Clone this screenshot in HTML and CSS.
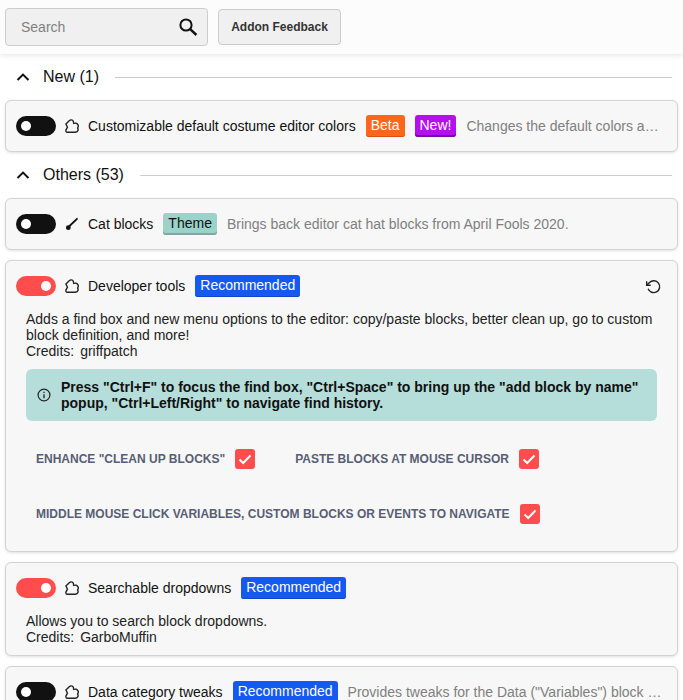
FILE: index.html
```html
<!DOCTYPE html>
<html lang="en">
<head>
<meta charset="utf-8">
<title>Addons</title>
<link rel="stylesheet" href="styles.css">
</head>
<body>
<svg class="defs" width="0" height="0" aria-hidden="true">
  <symbol id="puzzle" viewBox="0 0 14 14">
    <path d="M.9 4.900 4.500 1.600C5.200.6 7.600.6 8.300 2.200L8.700 4.500C10 3.700 12.500 4 13.200 6.200 13.500 7.300 13.100 8.300 12.600 9 13.500 10.200 13.300 13.200 10.500 13.200H2C1.300 13.200.9 12.700.9 12V11.200L2.500 8.200Z" fill="none" stroke="#222" stroke-width="1.400" stroke-linejoin="round"/>
  </symbol>
  <symbol id="chevron" viewBox="0 0 14 14">
    <path d="M1.500 10 7 4.600 12.500 10" fill="none" stroke="#111" stroke-width="2"/>
  </symbol>
  <symbol id="check" viewBox="0 0 20 20">
    <path d="M4.500 10.500 8.200 14 15.500 6.500" fill="none" stroke="#fff" stroke-width="2"/>
  </symbol>
</svg>

<header class="topbar">
  <div class="search">
    <span class="search-text">Search</span>
    <svg class="search-icon" viewBox="0 0 20 20"><circle cx="8" cy="8" r="5.600" fill="none" stroke="#111" stroke-width="2"/><path d="M12.200 12.200 18.400 18" stroke="#111" stroke-width="2.400" fill="none"/></svg>
  </div>
  <button class="feedback">Addon Feedback</button>
</header>

<main class="content">
  <section class="group group-new">
    <div class="section">
      <svg class="chev"><use href="#chevron"/></svg>
      <span class="section-name">New (1)</span>
      <span class="rule"></span>
    </div>
    <article class="card">
      <div class="row">
        <span class="toggle"></span>
        <svg class="ico"><use href="#puzzle"/></svg>
        <span class="name">Customizable default costume editor colors</span>
        <span class="tag tag-beta">Beta</span>
        <span class="tag tag-new">New!</span>
        <span class="desc">Changes the default colors and outlines of the costume editor.</span>
      </div>
    </article>
  </section>

  <section class="group">
    <div class="section">
      <svg class="chev"><use href="#chevron"/></svg>
      <span class="section-name">Others (53)</span>
      <span class="rule"></span>
    </div>
    <article class="card">
      <div class="row">
        <span class="toggle"></span>
        <svg class="ico" viewBox="0 0 14 14"><path d="M4.500 9 12 1.800" stroke="#111" stroke-width="1.800" stroke-linecap="round" fill="none"/><circle cx="3.300" cy="10.700" r="2.400" fill="#111"/></svg>
        <span class="name">Cat blocks</span>
        <span class="tag tag-theme">Theme</span>
        <span class="desc">Brings back editor cat hat blocks from April Fools 2020.</span>
      </div>
    </article>

    <article class="card">
      <div class="row">
        <span class="toggle on"></span>
        <svg class="ico"><use href="#puzzle"/></svg>
        <span class="name">Developer tools</span>
        <span class="tag tag-rec">Recommended</span>
        <svg class="reset" viewBox="0 0 24 24"><path d="M1 3.500V10h6.500" fill="none" stroke="#222" stroke-width="2.300"/><path d="M1 10 5.600 5.600A9.500 9.500 0 1 1 3.400 15.500" fill="none" stroke="#222" stroke-width="2.300"/></svg>
      </div>
      <p class="about">Adds a find box and new menu options to the editor: copy/paste blocks, better clean up, go to custom block definition, and more!<br>Credits: <span class="author">griffpatch</span></p>
      <div class="notice">
        <svg class="info" viewBox="0 0 14 14"><circle cx="7" cy="7" r="5.900" fill="none" stroke="#222" stroke-width="1.200"/><path d="M7 6.200v4M7 3.700v1.400" stroke="#222" stroke-width="1.300"/></svg>
        <span>Press "Ctrl+F" to focus the find box, "Ctrl+Space" to bring up the "add block by name" popup, "Ctrl+Left/Right" to navigate find history.</span>
      </div>
      <div class="settings">
        <label class="setting">ENHANCE "CLEAN UP BLOCKS"<span class="box"><svg class="tick"><use href="#check"/></svg></span></label>
        <label class="setting">PASTE BLOCKS AT MOUSE CURSOR<span class="box"><svg class="tick"><use href="#check"/></svg></span></label>
        <label class="setting">MIDDLE MOUSE CLICK VARIABLES, CUSTOM BLOCKS OR EVENTS TO NAVIGATE<span class="box"><svg class="tick"><use href="#check"/></svg></span></label>
      </div>
    </article>

    <article class="card">
      <div class="row">
        <span class="toggle on"></span>
        <svg class="ico"><use href="#puzzle"/></svg>
        <span class="name">Searchable dropdowns</span>
        <span class="tag tag-rec">Recommended</span>
      </div>
      <p class="about">Allows you to search block dropdowns.<br>Credits: <span class="author">GarboMuffin</span></p>
    </article>

    <article class="card">
      <div class="row">
        <span class="toggle"></span>
        <svg class="ico"><use href="#puzzle"/></svg>
        <span class="name">Data category tweaks</span>
        <span class="tag tag-rec">Recommended</span>
        <span class="desc">Provides tweaks for the Data ("Variables") block category.</span>
      </div>
    </article>
  </section>
</main>
</body>
</html>
```

FILE: styles.css
```css
* { box-sizing: border-box; }
html, body { margin: 0; height: 700px; overflow: hidden; background: #fff; }
body { font-family: "Liberation Sans", Arial, sans-serif; font-size: 14px; color: #111; }
.defs { position: absolute; }

.topbar { height: 54px; background: #fcfcfc; display: flex; align-items: center; padding: 0 5px; gap: 10px; box-shadow: 0 1px 6px rgba(0,0,0,.12); position: relative; }
.search { width: 203px; height: 38px; border: 1px solid #ccc; border-radius: 4px; background: #f0f0f0; display: flex; align-items: center; justify-content: space-between; padding: 0 9px 0 15px; }
.search-text { color: #808080; font-size: 14px; }
.search-icon { width: 20px; height: 20px; }
.feedback { width: 123px; height: 36px; border: 1px solid #ccc; border-radius: 4px; background: #f0f0f0; font: bold 12px "Liberation Sans", Arial, sans-serif; color: #333; padding: 0; }

.content { padding: 0 5px; }
.section { height: 46px; display: flex; align-items: center; padding: 0 6px 0 11px; }
.chev { width: 14px; height: 14px; flex: none; }
.section-name { font-size: 16px; margin-left: 13px; white-space: nowrap; }
.rule { flex: 1; height: 1px; background: #ccc; margin-left: 16px; }

.card { background: #f7f7f7; border: 1px solid #d3d3d3; border-radius: 6px; box-shadow: 0 1px 3px rgba(0,0,0,.12); padding: 10px; margin-bottom: 10px; }
.group-new .card { margin-bottom: 0; }
.row { display: flex; align-items: center; height: 30px; white-space: nowrap; padding-right: 3px; }
.toggle { width: 40px; height: 20px; border-radius: 10px; background: #111; flex: none; display: flex; align-items: center; padding: 0 5px; }
.toggle::after { content: ""; width: 10px; height: 10px; border-radius: 50%; background: #fff; }
.toggle.on { background: #ff4d4d; justify-content: flex-end; }
.ico { width: 14px; height: 14px; margin: 0 10px 0 9px; flex: none; }
.ico + .name { margin-left: -1px; }
.tag { font-size: 14px; line-height: 20px; padding: 0 5px; border-radius: 3px; margin-left: 10px; height: 22px; flex: none; }
.tag-beta { background: #ff661a; color: #fff; box-shadow: inset 0 -1px 0 #d9530f; }
.tag-new { background: #b30ff0; color: #fff; box-shadow: inset 0 -2px 0 #7a0a9e; }
.tag-theme { background: #9bd2ca; color: #111; box-shadow: inset 0 -2px 0 #7fa8a2; }
.tag-rec { background: #1659f2; color: #fff; box-shadow: inset 0 -1px 0 #0f47c4; }
.desc { color: #808080; margin-left: 10px; overflow: hidden; text-overflow: ellipsis; min-width: 0; }
.reset { width: 15px; height: 15px; margin-left: auto; margin-right: 3px; flex: none; }

.about { margin: 10px 0 0 10px; line-height: 16px; color: #222; }
.author { margin-left: 2px; }
.notice { background: #b5deda; border-radius: 6px; margin: 10px 10px 0; padding: 0 16px 0 11px; height: 52px; display: flex; align-items: center; gap: 10px; font-weight: bold; line-height: 16px; color: #111; }
.info { width: 14px; height: 14px; flex: none; }
.settings { display: flex; flex-wrap: wrap; padding: 10px 20px 0; column-gap: 40px; }
.setting { height: 55px; display: flex; align-items: center; font-weight: bold; font-size: 12px; color: #575e75; }
.box { width: 20px; height: 20px; border-radius: 3px; background: #ff4d4d; margin-left: 10px; display: flex; }
.tick { width: 20px; height: 20px; }
```
